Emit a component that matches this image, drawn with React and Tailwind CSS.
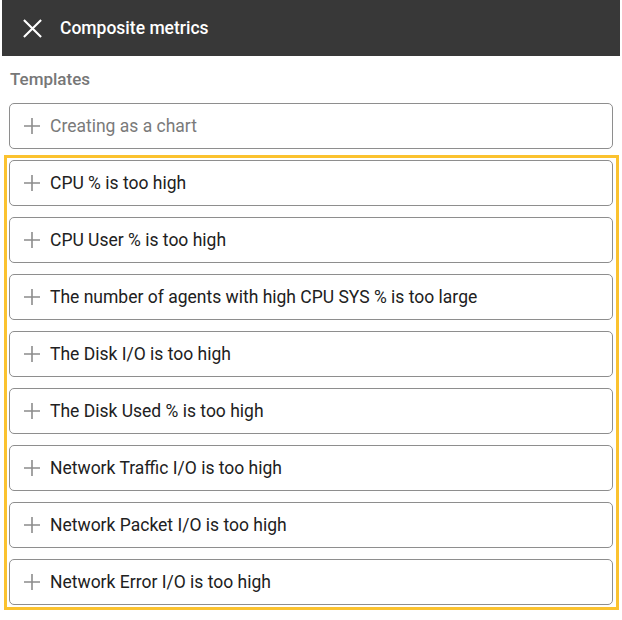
import React from "react";

const templates = [
  "CPU % is too high",
  "CPU User % is too high",
  "The number of agents with high CPU SYS % is too large",
  "The Disk I/O is too high",
  "The Disk Used % is too high",
  "Network Traffic I/O is too high",
  "Network Packet I/O is too high",
  "Network Error I/O is too high",
];

function PlusIcon() {
  return (
    <svg width="18" height="18" viewBox="0 0 18 18" className="shrink-0">
      <path d="M9 1v16M1 9h16" stroke="#8c8c8c" strokeWidth="1.6" fill="none" />
    </svg>
  );
}

function TemplateRow({ label, muted }) {
  return (
    <div className="flex items-center h-[46px] border border-[#8e8e8e] rounded-[5px] bg-white pl-[13px] gap-[9px]">
      <PlusIcon />
      <span className={muted ? "text-[17.5px] text-[#7a7a7a]" : "text-[17.5px] text-[#212121]"}>{label}</span>
    </div>
  );
}

export default function App() {
  return (
    <div className="w-[622px] h-[620px] bg-white" style={{ fontFamily: "Roboto, 'Liberation Sans', sans-serif" }}>
      <div className="mx-[2px] h-14 bg-[#383838] flex items-center pl-5 gap-[17px]">
        <svg width="21" height="21" viewBox="0 0 22 22">
          <path d="M2 2l18 18M20 2L2 20" stroke="#fff" strokeWidth="2.2" fill="none" />
        </svg>
        <span className="text-white text-[17.5px] font-medium">Composite metrics</span>
      </div>
      <div className="px-[10px] pt-[12px] text-[17px] leading-[23px] font-medium text-[#777777]">Templates</div>
      <div className="mx-[9px] mt-[12px]">
        <TemplateRow label="Creating as a chart" muted />
      </div>
      <div className="ml-[4px] w-[615px] mt-[6px] border-[3px] border-[#fbc22f] pl-[2px] pr-[3px] py-[2px] flex flex-col gap-[11px]">
        {templates.map((t) => (
          <TemplateRow key={t} label={t} />
        ))}
      </div>
    </div>
  );
}
